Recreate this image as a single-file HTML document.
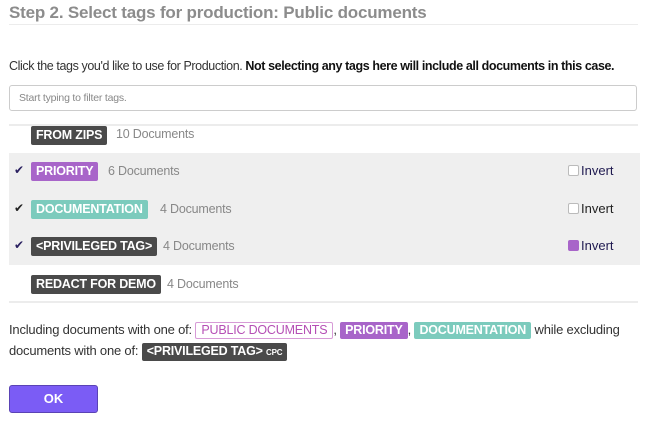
<!DOCTYPE html>
<html><head><style>
*{margin:0;padding:0;box-sizing:border-box}
body{width:650px;height:427px;background:#fff;font-family:"Liberation Sans",sans-serif;position:relative;overflow:hidden;color:#333}
.a{position:absolute}
h1{position:absolute;left:9px;top:3px;font-size:17px;color:#8c8c8c;font-weight:bold;letter-spacing:-0.2px}
.hr{position:absolute;left:9px;width:629px;height:2px;background:#ececec}
.intro{left:9px;top:59px;font-size:12.5px;letter-spacing:-0.4px;white-space:nowrap}
.input{left:9px;top:85px;width:628px;height:26px;border:1px solid #ccc;border-radius:3px;font-size:10.5px;color:#888;padding:6px 9px;letter-spacing:-0.2px}
.tag{display:inline-block;font-weight:bold;color:#fff;font-size:12.5px;padding:2px 5px;border-radius:2px;letter-spacing:-0.2px;line-height:15px;white-space:nowrap}
.dk{background:#4a4a4a}.pu{background:#a865c9}.te{background:#7ccbbd}
.row{position:absolute;left:9px;width:631px;height:37px}
.row .tag{position:absolute;left:22px}
.cnt{position:absolute;font-size:12.5px;color:#888;letter-spacing:-0.2px}
.chk{position:absolute;left:5px;font-size:12px;color:#2a2060}
.inv{position:absolute;left:559px;font-size:13px;color:#1f1a50;white-space:nowrap}
.box{display:inline-block;width:11px;height:11px;border:1px solid #bbb;border-radius:2px;vertical-align:-1px;margin-right:2px;background:#fff}
.sum{left:9px;top:319px;font-size:13px;line-height:21px;letter-spacing:-0.2px;width:630px}
.sum .tag{font-size:12.5px;padding:1px 5px;font-weight:normal}
.btn{left:9px;top:385px;width:89px;height:28px;background:#7b5cf5;border:1px solid #5a43b5;border-radius:3px;color:#fff;font-weight:bold;font-size:13px;text-align:center;line-height:26px}
</style></head><body>
<h1>Step 2. Select tags for production: Public documents</h1>
<div class="hr" style="top:24px;height:1px"></div>
<div class="a intro">Click the tags you'd like to use for Production. <b style="color:#111">Not selecting any tags here will include all documents in this case.</b></div>
<div class="a input">Start typing to filter tags.</div>
<div class="hr" style="top:124px"></div>
<div class="row" style="top:116px"><span class="tag dk" style="top:10px">FROM ZIPS</span><span class="cnt" style="left:107px;top:11px">10 Documents</span></div>
<div class="a" style="left:9px;top:153px;width:631px;height:112px;background:#efefef"></div>
<div class="row" style="top:153px"><span class="chk" style="top:10px">✔</span><span class="tag pu" style="top:9px">PRIORITY</span><span class="cnt" style="left:99px;top:11px">6 Documents</span><span class="inv" style="top:10px"><span class="box"></span>Invert</span></div>
<div class="row" style="top:190px"><span class="chk" style="top:11px;color:#222">✔</span><span class="tag te" style="top:10px">DOCUMENTATION</span><span class="cnt" style="left:151px;top:12px">4 Documents</span><span class="inv" style="top:11px;color:#222"><span class="box"></span>Invert</span></div>
<div class="row" style="top:227px"><span class="chk" style="top:11px">✔</span><span class="tag dk" style="top:10px">&lt;PRIVILEGED TAG&gt;</span><span class="cnt" style="left:154px;top:12px">4 Documents</span><span class="inv" style="top:11px"><span class="box" style="background:#a865c9;border-color:#a865c9"></span>Invert</span></div>
<div class="row" style="top:265px"><span class="tag dk" style="top:10px">REDACT FOR DEMO</span><span class="cnt" style="left:158px;top:12px">4 Documents</span></div>
<div class="hr" style="top:301px"></div>
<div class="a sum">Including documents with one of: <span class="tag" style="color:#b54fb5;border:1px solid #d79bd7;background:#fff;padding:0 5px">PUBLIC DOCUMENTS</span>, <span class="tag pu" style="font-weight:bold">PRIORITY</span>, <span class="tag te" style="font-weight:bold">DOCUMENTATION</span> while excluding documents with one of: <span class="tag dk" style="font-weight:bold">&lt;PRIVILEGED TAG&gt; <span style="font-size:8px">CPC</span></span></div>
<div class="a btn">OK</div>
</body></html>
